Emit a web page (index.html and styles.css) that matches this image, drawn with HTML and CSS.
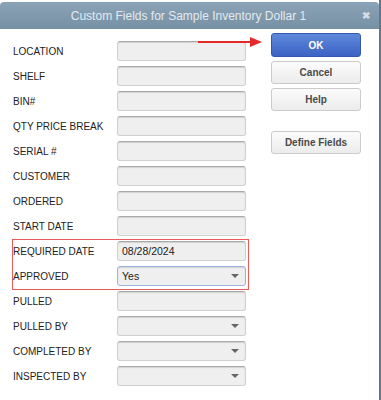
FILE: index.html
```html
<!DOCTYPE html>
<html lang="en">
<head>
<meta charset="UTF-8">
<title>Custom Fields for Sample Inventory Dollar 1</title>
<link rel="stylesheet" href="styles.css">
</head>
<body>

<div class="window">
    <!-- title bar -->
    <div class="titlebar">
        <span class="title">Custom Fields for Sample Inventory Dollar 1</span>
        <span class="close">&#10006;</span>
    </div>

    <div class="content">
        <div class="fields">
            <div class="row"><div class="label">LOCATION</div><div class="field"></div></div>
            <div class="row"><div class="label">SHELF</div><div class="field"></div></div>
            <div class="row"><div class="label">BIN#</div><div class="field"></div></div>
            <div class="row"><div class="label">QTY PRICE BREAK</div><div class="field"></div></div>
            <div class="row"><div class="label">SERIAL #</div><div class="field"></div></div>
            <div class="row"><div class="label">CUSTOMER</div><div class="field"></div></div>
            <div class="row"><div class="label">ORDERED</div><div class="field"></div></div>
            <div class="row"><div class="label">START DATE</div><div class="field"></div></div>
            <div class="highlight">
                <div class="row"><div class="label">REQUIRED DATE</div><div class="field">08/28/2024</div></div>
                <div class="row"><div class="label">APPROVED</div><div class="field select focused">Yes<span class="arrow"></span></div></div>
            </div>
            <div class="row"><div class="label">PULLED</div><div class="field"></div></div>
            <div class="row"><div class="label">PULLED BY</div><div class="field select"><span class="arrow"></span></div></div>
            <div class="row"><div class="label">COMPLETED BY</div><div class="field select"><span class="arrow"></span></div></div>
            <div class="row"><div class="label">INSPECTED BY</div><div class="field select"><span class="arrow"></span></div></div>
        </div>

        <div class="buttons">
            <button class="btn primary">OK</button>
            <button class="btn">Cancel</button>
            <button class="btn">Help</button>
            <button class="btn define">Define Fields</button>
        </div>

        <!-- red pointer arrow -->
        <div class="pointer"><span class="shaft"></span><span class="head"></span></div>
    </div>
</div>

</body>
</html>
```

FILE: styles.css
```css
body, html {
    margin: 0;
    background-color: white;
    font-family: 'Liberation Sans', Arial, sans-serif;
}

.window {
    width: 379px;
    height: 400px;
    border-right: 2px solid #62788a;
    background-color: white;
    overflow: hidden;
}

/* title bar */
.titlebar {
    height: 27px;
    margin-top: 2px;
    border-radius: 4px 4px 0 0;
    background: linear-gradient(#8ba3b6, #7690a4);
    display: flex;
    align-items: center;
    justify-content: center;
    position: relative;
}

.titlebar .title {
    color: #e2eaf0;
    font-size: 12px;
    padding-right: 2px;
}

.titlebar .close {
    position: absolute;
    right: 9px;
    top: 8px;
    color: #d4dde5;
    font-size: 10px;
    font-weight: bold;
}

.content {
    display: flex;
    position: relative;
}

.fields {
    padding: 12px 0 0 13px;
    display: flex;
    flex-direction: column;
    gap: 5px;
}

.highlight {
    display: flex;
    flex-direction: column;
    gap: 5px;
    position: relative;
}

.highlight::after {
    content: "";
    position: absolute;
    top: -2px;
    left: -1px;
    right: -3px;
    bottom: -4px;
    border: 1px solid #ec5a5a;
}

.row {
    display: flex;
    align-items: center;
    height: 20px;
}

.label {
    width: 104px;
    overflow: hidden;
    white-space: nowrap;
    font-size: 10px;
    color: #222;
    padding-top: 1px;
}

.field {
    width: 129px;
    height: 20px;
    box-sizing: border-box;
    background-color: #efefef;
    border: 1px solid #d0d0d0;
    border-top-color: #a9a9a9;
    border-radius: 3px;
    box-shadow: inset 0 1px 1px rgba(0, 0, 0, 0.12);
    font-size: 10.5px;
    color: #222;
    padding: 0 4px;
    display: flex;
    align-items: center;
    justify-content: space-between;
}

.field.focused {
    border-color: #9db4df;
}

.arrow {
    margin-left: auto;
    margin-right: 2px;
    width: 0;
    height: 0;
    border-left: 4px solid transparent;
    border-right: 4px solid transparent;
    border-top: 4px solid #666;
}

.buttons {
    padding: 4px 0 0 25px;
    display: flex;
    flex-direction: column;
    gap: 4px;
}

.btn {
    width: 90px;
    height: 23px;
    box-sizing: border-box;
    border: 1px solid #cbcbcb;
    border-radius: 3px;
    background: linear-gradient(#fbfbfb, #ececec);
    font-family: 'Liberation Sans', Arial, sans-serif;
    font-size: 10px;
    font-weight: bold;
    color: #4a4a4a;
    padding: 0;
}

.btn.primary {
    height: 24px;
    background: linear-gradient(#5e89da, #3c62c4);
    border-color: #3457b0;
    color: white;
}

.btn.define {
    margin-top: 16px;
}

/* annotation arrow */
.pointer {
    position: absolute;
    left: 198px;
    top: 8px;
    display: flex;
    align-items: center;
}

.pointer .shaft {
    width: 52px;
    height: 2px;
    background-color: #e42a2a;
}

.pointer .head {
    width: 0;
    height: 0;
    border-top: 5px solid transparent;
    border-bottom: 5px solid transparent;
    border-left: 12px solid #e42a2a;
}
```
